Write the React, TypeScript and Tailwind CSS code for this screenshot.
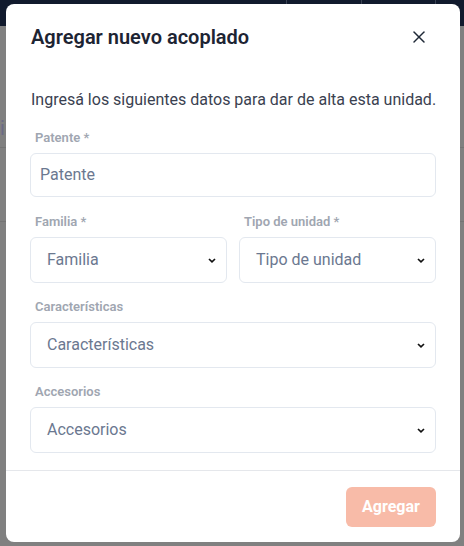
import { X } from "lucide-react";

function Chevron() {
  return (
    <svg width="8" height="5" viewBox="0 0 8 5" className="shrink-0">
      <path d="M1 1 L4 3.8 L7 1" fill="none" stroke="#111" strokeWidth="1.7" />
    </svg>
  );
}

function Label({ children }: { children: React.ReactNode }) {
  return (
    <div className="pl-[5px] text-[13px] leading-[16px] font-semibold text-[#a0a6b1]">{children}</div>
  );
}

function Select({ placeholder }: { placeholder: string }) {
  return (
    <div className="mt-[7px] h-[46px] rounded-md border border-[#e3e8ef] bg-white pl-4 pr-[10px] flex items-center justify-between">
      <span className="text-[16px] text-[#6b7890]">{placeholder}</span>
      <Chevron />
    </div>
  );
}

export default function App() {
  return (
    <div className="relative w-[464px] h-[546px] overflow-hidden bg-[#808080] font-['Roboto',sans-serif]">
      {/* page behind the overlay */}
      <div className="h-[26px] bg-[#111a2d] flex">
        <div className="w-[287px] border-r border-[#3a4253]" />
        <div className="w-[75px] border-r border-[#3a4253]" />
        <div className="w-[74px] border-r border-[#3a4253]" />
      </div>
      <div className="mt-[121px] h-px bg-[#747474]" />
      <div className="mt-[73px] h-px bg-[#747474]" />
      <div className="absolute left-0 top-[113px] text-[20px] text-[#6b6a86]">i</div>

      {/* modal */}
      <div className="absolute left-[6px] top-[4px] w-[454px] h-[538px] rounded-lg bg-white flex flex-col">
        <div className="px-6 pt-[19px] flex items-center justify-between">
          <h2 className="text-[20px] leading-[28px] font-semibold text-[#1d2433] pl-px">Agregar nuevo acoplado</h2>
          <X size={20} strokeWidth={1.8} className="mr-[7px] text-[#1f2937]" />
        </div>
        <div className="px-6 pt-[37px] flex-1">
          <p className="text-[16px] leading-6 text-[#3a4150] pl-px whitespace-nowrap">
            Ingresá los siguientes datos para dar de alta esta unidad.
          </p>
          <div className="mt-[18px]">
            <Label>Patente *</Label>
            <div className="mt-[7px] h-[44px] rounded-md border border-[#e3e8ef] pl-[9px] flex items-center">
              <span className="text-[16px] text-[#6b7890]">Patente</span>
            </div>
          </div>
          <div className="mt-[17px] grid grid-cols-2 gap-3">
            <div>
              <Label>Familia *</Label>
              <Select placeholder="Familia" />
            </div>
            <div>
              <Label>Tipo de unidad *</Label>
              <Select placeholder="Tipo de unidad" />
            </div>
          </div>
          <div className="mt-4">
            <Label>Características</Label>
            <Select placeholder="Características" />
          </div>
          <div className="mt-4">
            <Label>Accesorios</Label>
            <Select placeholder="Accesorios" />
          </div>
        </div>
        <div className="border-t border-[#e5e7eb] px-6 pt-4 pb-[15px] flex justify-end">
          <button className="h-10 w-[90px] rounded-md bg-[#f8bba8] text-white text-[16px] font-bold">
            Agregar
          </button>
        </div>
      </div>
    </div>
  );
}
